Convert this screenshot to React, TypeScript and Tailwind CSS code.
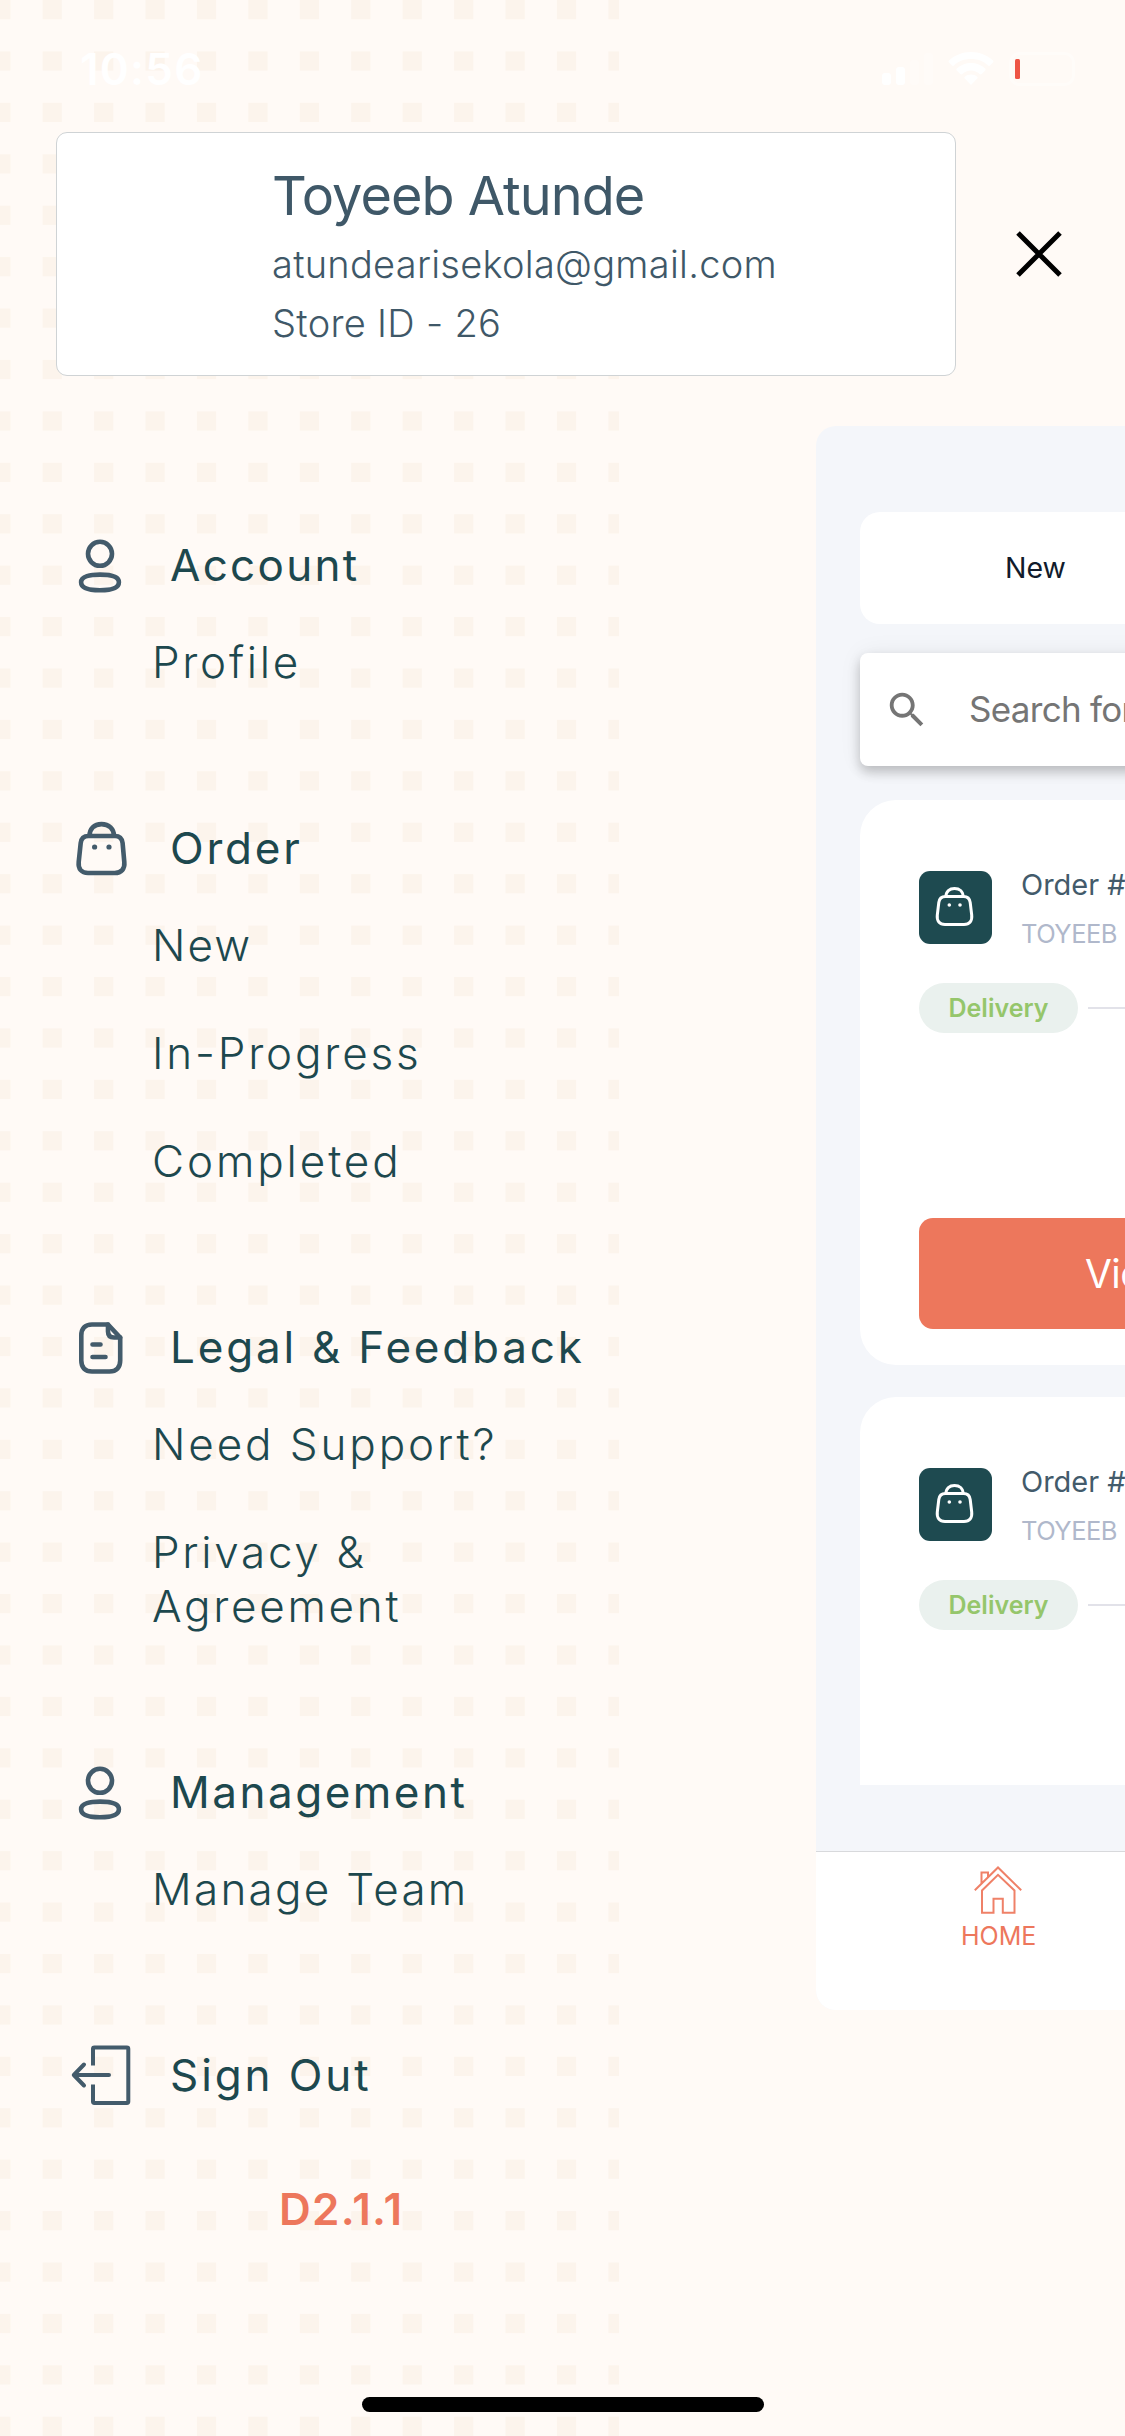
import React from "react";

const columns = Array.from({ length: 13 }, (_, i) => i * 51.43 - 8.8);
const rows = Array.from({ length: 48 }, (_, i) => i * 51.42);

function Pattern() {
  return (
    <svg className="absolute left-0 top-0" width="619" height="2436" viewBox="0 0 619 2436" fill="#fcf4ec" aria-hidden="true">
      {rows.map((y) => columns.map((x) => <rect key={`${x}-${y}`} x={x} y={y} width="19.2" height="19.2" />))}
    </svg>
  );
}

function PersonIcon() {
  return (
    <svg className="ml-[3px]" width="54" height="56" viewBox="0 0 54 56" fill="none" stroke="#435b6b" strokeWidth="4.6">
      <circle cx="26" cy="16.800" r="12" />
      <path d="M26 37.600c-9.500 0-18.900 1.600-18.900 7.600 0 6.400 9.400 8 18.900 8s18.900-1.600 18.900-8c0-6-9.400-7.600-18.900-7.600z" />
    </svg>
  );
}

function BagIcon() {
  return (
    <svg className="ml-[3px]" width="54" height="56" viewBox="0 0 54 56" fill="none" stroke="#435b6b" strokeWidth="4.6">
      <path d="M15.500 16C15.500 9 20 4.100 27.500 4.100S40 9 40 16" />
      <path d="M14.500 16h26.500c4.500 0 7 2.500 7.600 7l1.700 19c.7 7-3 11-9.500 11H14c-6.500 0-10-4-9.300-11l2-19c.5-4.500 3.300-7 7.800-7z" />
      <circle cx="20.600" cy="27" r="2.600" fill="#435b6b" stroke="none" />
      <circle cx="35" cy="27" r="2.600" fill="#435b6b" stroke="none" />
    </svg>
  );
}

function DocIcon() {
  return (
    <svg className="ml-[3px]" width="54" height="54" viewBox="0 0 54 54" fill="none" stroke="#435b6b" strokeWidth="4.600" strokeLinecap="round" strokeLinejoin="round">
      <path d="M34 4.500H18C11 4.500 7.300 8.500 7.300 15.500v25c0 7 3.700 11 10.700 11h17.500c7 0 10.700-4 10.700-11V17.500z" />
      <path d="M34 4.500v7c0 4 2 6 6 6h6.200M18.500 24.500h8M18.500 37h13" />
    </svg>
  );
}

function SignOutIcon() {
  return (
    <svg width="60" height="60" viewBox="0 0 60 60" fill="none" stroke="#435b6b" strokeWidth="4" strokeLinecap="round" strokeLinejoin="round">
      <path strokeLinecap="butt" d="M22 20.500V3.800c0-.9.500-1.400 1.400-1.400h32.500c.9 0 1.400.5 1.400 1.400v52.800c0 .9-.5 1.400-1.400 1.400H23.400c-.9 0-1.400-.5-1.400-1.400V39.500" />
      <path d="M38 30H3M13 19.500L2.800 30 13 40.500" />
    </svg>
  );
}

function Section({ icon, title, titleClass, children, className = "" }: { icon: React.ReactNode; title: string; titleClass: string; children?: React.ReactNode; className?: string }) {
  return (
    <section className={className}>
      <div className="flex h-[54px] items-center">
        <span className="flex w-[99px] shrink-0 items-center">{icon}</span>
        <h2 className={`whitespace-nowrap text-[44px] font-normal leading-[54px] ${titleClass}`}>{title}</h2>
      </div>
      {children && <ul className="ml-[81px] mt-[43px] flex flex-col gap-[54px] text-[44px] font-light leading-[54px]">{children}</ul>}
    </section>
  );
}

function OrderCard({ className, withButton }: { className: string; withButton?: boolean }) {
  return (
    <article className={`w-[600px] shrink-0 bg-white pl-[59px] pt-[71px] ${className}`}>
      <div className="flex">
        <div className="flex size-[73px] items-center justify-center rounded-[11px] bg-[#1e4a50]">
          <svg className="-ml-1 -mt-1" width="40" height="42" viewBox="0 0 40 42" fill="none" stroke="white" strokeWidth="3">
            <path d="M12 11.500C12 6.500 15.500 3.600 20.500 3.600S29 6.500 29 11.500" />
            <path d="M11.500 11.500h18c4 0 6.200 2 6.700 6l1.500 12.500c.7 6-2.200 9.500-7.700 9.500H11c-5.500 0-8.400-3.500-7.700-9.500l1.500-12.500c.5-4 2.700-6 6.700-6z" />
            <circle cx="15.300" cy="20" r="1.800" fill="white" stroke="none" />
            <circle cx="26" cy="20" r="1.800" fill="white" stroke="none" />
          </svg>
        </div>
        <div className="ml-[29px] whitespace-nowrap">
          <p className="-mt-1 text-[29px] leading-[36px] text-[#435b6b]">Order #</p>
          <p className="mt-[14px] text-[25.500px] leading-[34px] tracking-[-0.500px] text-[#b0b8cb]">TOYEEB</p>
        </div>
      </div>
      <div className="mt-[32px] flex items-center">
        <span className="flex h-[50px] w-[159px] items-center justify-center rounded-full bg-[#eaf1ee] pt-px text-[25px] font-semibold text-[#95c66b]">Delivery</span>
        <span className="ml-[10px] h-[2px] w-[300px] bg-[#e2e2e9]" />
      </div>
      {withButton && (
        <button className="mt-[185px] block h-[111px] w-[480px] rounded-[14px] bg-[#ed775c] pl-[166px] text-left text-[39px] leading-[111px] tracking-[-0.600px] text-white">View</button>
      )}
    </article>
  );
}

export default function App() {
  return (
    <div className="relative h-[2436px] w-[1125px] overflow-hidden bg-[#fffaf6] font-['Inter',sans-serif]">
      <Pattern />
      <div className="relative flex h-full flex-col">
        <header className="flex h-[132px] shrink-0 justify-between pl-[80px] pr-[48px] pt-[42px] text-white">
          <span className="text-[44px] font-semibold leading-[54px] tracking-[1.200px]">10:56</span>
          <svg className="mt-[6px]" width="202" height="44" viewBox="0 0 202 44" fill="white" aria-hidden="true">
            <rect x="7" y="25" width="9" height="12" rx="3" />
            <rect x="21" y="19" width="9" height="18" rx="3" />
            <g opacity="0.3">
              <rect x="35" y="12" width="9" height="25" rx="3" />
              <rect x="49" y="5" width="9" height="32" rx="3" />
            </g>
            <path d="M96 4c8.500 0 16 3 22 8.500.6.600.6 1.400 0 2l-3 3c-.6.500-1.400.5-2 0C108.500 13 102.500 11 96 11s-12.500 2-17 6.500c-.6.500-1.400.5-2 0l-3-3c-.6-.6-.6-1.400 0-2C80 7 87.500 4 96 4z" />
            <path d="M96 15c5.500 0 10.500 2 14.200 5.500.6.600.6 1.400 0 2l-3.500 3.500c-.6.500-1.300.5-2 0-2.500-2.200-5.500-3.500-8.700-3.500s-6.200 1.300-8.700 3.500c-.7.500-1.400.5-2 0L81.800 22.500c-.6-.6-.6-1.400 0-2C85.500 17 90.500 15 96 15z" />
            <path d="M96 26.500c2.300 0 4.500.8 6.200 2.200.6.600.6 1.300 0 1.900L96 37l-6.200-6.400c-.6-.6-.6-1.300 0-1.900 1.700-1.400 3.900-2.200 6.200-2.200z" />
            <rect x="135.500" y="5.500" width="63" height="31" rx="9" fill="none" stroke="white" strokeWidth="3" opacity="0.4" />
            <rect x="140" y="11" width="5" height="20" rx="1.500" fill="#ee5545" />
          </svg>
        </header>

        <div className="flex shrink-0">
          <div className="ml-[56px] h-[244px] w-[900px] rounded-[11px] border border-[#cfd3d5] bg-white pl-[216px] pt-[31px] text-[#3f5868]">
            <h1 className="-ml-px text-[54px] leading-[64px] tracking-[-0.950px]">Toyeeb Atunde</h1>
            <p className="-ml-px mt-[13px] text-[38px] font-light leading-[46px] tracking-[0.260px]">atundearisekola@gmail.com</p>
            <p className="-ml-px mt-[13px] text-[38px] font-light leading-[46px] tracking-[0.300px]">Store ID - 26</p>
          </div>
          <svg className="ml-[58px] mt-[97px]" width="50" height="50" viewBox="0 0 50 50" stroke="black" strokeWidth="5" strokeLinecap="butt">
            <path d="M4 4l42 42M46 4l-42 42" />
          </svg>
        </div>

        <div className="flex min-h-0 flex-1">
          <nav className="w-[816px] shrink-0 pl-[71px] pt-[162px] text-[#1d484e]">
            <Section icon={<PersonIcon />} title="Account" titleClass="tracking-[2.300px]">
              <li className="tracking-[2.700px]">Profile</li>
            </Section>
            <Section className="mt-[131.500px]" icon={<BagIcon />} title="Order" titleClass="tracking-[2.800px]">
              <li className="tracking-[2.100px]">New</li>
              <li className="tracking-[2.800px]">In-Progress</li>
              <li className="tracking-[2.900px]">Completed</li>
            </Section>
            <Section className="mt-[132px]" icon={<DocIcon />} title="Legal & Feedback" titleClass="tracking-[2.800px]">
              <li className="tracking-[2.900px]">Need Support?</li>
              <li className="tracking-[2.700px]">Privacy &amp;<br />Agreement</li>
            </Section>
            <Section className="mt-[132px]" icon={<PersonIcon />} title="Management" titleClass="tracking-[2.500px]">
              <li className="tracking-[2.300px]">Manage Team</li>
            </Section>
            <Section className="mt-[132px]" icon={<SignOutIcon />} title="Sign Out" titleClass="tracking-[2.900px]" />
            <p className="ml-[208px] mt-[80px] text-[44px] font-semibold leading-[54px] tracking-[1.300px] text-[#ed775c]">D2.1.1</p>
          </nav>

          <main className="mt-[50px] flex h-[1584px] w-[309px] shrink-0 flex-col overflow-hidden rounded-l-[20px] bg-[#f4f6fa]">
            <div className="flex h-[1425px] shrink-0 flex-col pl-[44px] pt-[86px]">
              <div className="flex h-[112px] w-[600px] shrink-0 items-center rounded-[20px] bg-white pl-[145px] pt-px text-[28.500px] text-[#111b2b]">New</div>
              <div className="mt-[29px] flex h-[113px] w-[600px] shrink-0 items-center rounded-[8px] bg-white shadow-[0_6px_12px_rgba(0,0,0,0.22),0_0_24px_rgba(0,0,0,0.06)]">
                <svg className="ml-[24px]" width="46" height="46" viewBox="0 0 24 24" fill="#757575">
                  <path d="M15.500 14h-.79l-.28-.27C15.410 12.590 16 11.110 16 9.500 16 5.910 13.090 3 9.500 3S3 5.910 3 9.500 5.910 16 9.500 16c1.610 0 3.090-.59 4.230-1.570l.27.280v.79l5 4.990L20.490 19l-4.990-5zm-6 0C7.010 14 5 11.990 5 9.500S7.010 5 9.500 5 14 7.010 14 9.500 11.990 14 9.500 14z" />
                </svg>
                <span className="ml-[39px] whitespace-nowrap text-[35px] tracking-[-0.700px] text-[#757575]">Search for</span>
              </div>
              <div className="mt-[34px] flex h-[985px] shrink-0 flex-col gap-[32px] overflow-hidden">
                <OrderCard className="h-[565px] rounded-[36px]" withButton />
                <OrderCard className="h-[565px] rounded-[36px]" />
              </div>
            </div>
            <footer className="flex h-[159px] shrink-0 flex-col border-t border-[#d8d9dc] bg-white">
              <svg className="ml-[158px] mt-[14px]" width="48" height="48" viewBox="0 0 48 48" fill="none" stroke="#ef8168" strokeWidth="2">
                <path d="M.8 24.300L24 1.500l23.200 22.800M7.500 17V6.500H14v4.300" />
                <path d="M8 24.500v22.200h11.500V32.800h9.300v13.900H40.500V24.500L24 8.800z" />
              </svg>
              <span className="ml-[145px] mt-[7px] text-[25px] leading-[30px] text-[#ed775c]">HOME</span>
            </footer>
          </main>
        </div>
        <div className="absolute bottom-[24px] left-[362px] h-[15px] w-[402px] rounded-full bg-black" />
      </div>
    </div>
  );
}
